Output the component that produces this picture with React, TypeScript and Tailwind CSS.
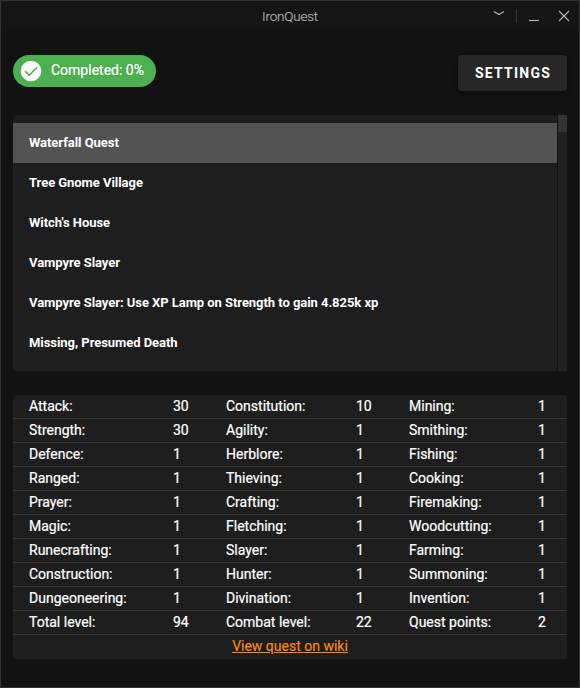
import React from "react";

const quests: string[] = [
  "Waterfall Quest",
  "Tree Gnome Village",
  "Witch's House",
  "Vampyre Slayer",
  "Vampyre Slayer: Use XP Lamp on Strength to gain 4.825k xp",
  "Missing, Presumed Death",
];

type Stat = [string, number];

const rows: [Stat, Stat, Stat][] = [
  [["Attack:", 30], ["Constitution:", 10], ["Mining:", 1]],
  [["Strength:", 30], ["Agility:", 1], ["Smithing:", 1]],
  [["Defence:", 1], ["Herblore:", 1], ["Fishing:", 1]],
  [["Ranged:", 1], ["Thieving:", 1], ["Cooking:", 1]],
  [["Prayer:", 1], ["Crafting:", 1], ["Firemaking:", 1]],
  [["Magic:", 1], ["Fletching:", 1], ["Woodcutting:", 1]],
  [["Runecrafting:", 1], ["Slayer:", 1], ["Farming:", 1]],
  [["Construction:", 1], ["Hunter:", 1], ["Summoning:", 1]],
  [["Dungeoneering:", 1], ["Divination:", 1], ["Invention:", 1]],
  [["Total level:", 94], ["Combat level:", 22], ["Quest points:", 2]],
];

function TitleBar() {
  return (
    <header className="grid h-[30px] shrink-0 grid-cols-[1fr_auto_1fr] bg-[#151515] text-[#b0b0b0]">
      <span />
      <h1 className="font-[Roboto,sans-serif] text-[13.5px] leading-[30px] font-light tracking-[-0.2px] [-webkit-text-stroke:0.2px]">IronQuest</h1>
      <div className="flex justify-end pr-[9px]">
        <svg className="h-[30px] w-[80px]" viewBox="0 0 80 30" fill="none" stroke="#b4b4b4" strokeWidth="1.1">
          <path d="M4 10.5L9 13.5L14 10.5" />
          <path d="M26.5 8V22" stroke="#383838" strokeWidth="1" />
          <path d="M39 19.5H49" />
          <path d="M69 10L79 20M79 10L69 20" />
        </svg>
      </div>
    </header>
  );
}

export default function App() {
  return (
    <div className="flex h-[688px] w-[580px] flex-col overflow-hidden border border-[#333] bg-[#121212] font-[Roboto,sans-serif] text-white">
      <TitleBar />
      <main className="flex flex-col px-3 pt-6">
        <div className="flex h-9 items-start justify-between">
          <div className="flex h-8 w-[143px] items-center rounded-full bg-[#4caf50] pl-[6px] text-sm">
            <svg className="mr-[8px] size-6" viewBox="0 0 24 24">
              <circle cx="12" cy="12" r="10.3" fill="#fff" />
              <path d="M6 12.2L10.2 16.2L18.2 8.2" fill="none" stroke="#4caf50" strokeWidth="1.6" />
            </svg>
            <span className="-mt-[3px] [-webkit-text-stroke:0.2px]">Completed: 0%</span>
          </div>
          <button className="h-9 w-[109px] rounded bg-[#272727] pl-px text-sm font-bold tracking-[1.25px] shadow-[0_3px_5px_rgba(0,0,0,0.35)]">
            SETTINGS
          </button>
        </div>

        <section className="mt-6 flex h-64 overflow-hidden rounded-l bg-[#1e1e1e]">
          <ul className="flex-1 pt-2">
            {quests.map((quest, i) => (
              <li
                key={quest}
                className={`h-10 px-4 text-[13px] leading-[39px] font-bold tracking-[-0.05px] ${i === 0 ? "bg-[#535353]" : ""}`}
              >
                {quest}
              </li>
            ))}
          </ul>
          <div className="w-[10px] border-l border-[#121212] bg-[#212121]">
            <div className="h-[17px] bg-[#333]" />
          </div>
        </section>

        <section className="mt-6 overflow-hidden rounded bg-[#1e1e1e] text-sm">
          {rows.map((row) => (
            <div
              key={row[0][0]}
              className="grid h-6 grid-cols-[144px_53px_130px_53px_129px_45px] border-b border-[#393939] leading-[23px] [-webkit-text-stroke:0.2px]"
            >
              {row.map(([label, value]) => (
                <React.Fragment key={label}>
                  <span className="pl-4">{label}</span>
                  <span className="pl-4">{value}</span>
                </React.Fragment>
              ))}
            </div>
          ))}
          <div className="h-6 text-center leading-[23px]">
            <a className="text-[#fb8c00] underline [-webkit-text-stroke:0.15px]">View quest on wiki</a>
          </div>
        </section>
      </main>
    </div>
  );
}
